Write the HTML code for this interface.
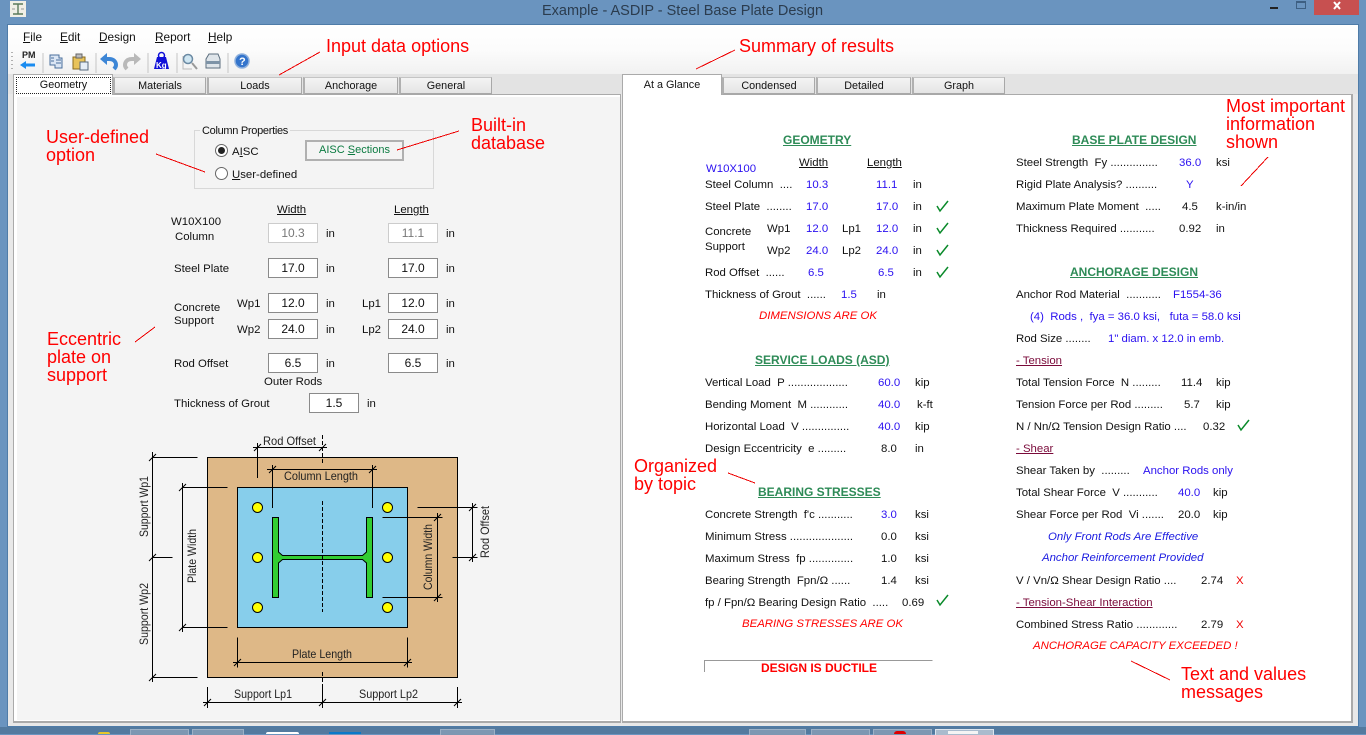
<!DOCTYPE html>
<html><head><meta charset="utf-8"><style>
html,body{margin:0;padding:0}
body{width:1366px;height:734px;overflow:hidden;position:relative;background:#6a94bf;font:11.4px/16px "Liberation Sans",sans-serif;color:#111}
div,span,svg{position:absolute}
span{white-space:nowrap}
u{text-decoration:underline}
.b{color:#2a10f0}.r{color:#f00;font-size:18px;line-height:18px}
.h{font-size:12px;line-height:14px;font-weight:bold;color:#2e8b57;text-decoration:underline}
.m{color:#f00;font-style:italic}.bi{color:#1a1ae0;font-style:italic}
.in{width:48px;height:18px;border:1px solid #8a8a8a;background:#fff;text-align:center;line-height:18px;font-size:12px}
.in.g{border-color:#ccc;color:#777}
.tab{height:15px;top:77px;background:linear-gradient(#f4f4f4,#e4e4e4);border:1px solid #a8a8a8;border-left:2px solid #b0b0b0;border-top:1px solid #c4c4c4;border-bottom:2px solid #a8a8a8;text-align:center;line-height:16px;font-size:10.8px}
.tb{top:729px;height:5px;background:#7d97b2;border:1px solid #9db1c6;border-bottom:0}
</style></head><body>

<!-- frame -->
<div style="left:8px;top:25px;width:1350px;height:701px;background:#e8e8e8;outline:1px solid #4f7ca8"></div>
<div style="left:8px;top:25px;width:1350px;height:49px;background:linear-gradient(#fff 0,#fcfcfc 50%,#f1f1f1 100%)"></div>
<div style="left:8px;top:74px;width:1350px;height:20px;background:#e3e3e3"></div>
<div style="left:0;top:727px;width:1366px;height:7px;background:#537a9f"></div>

<!-- title bar -->
<div style="left:10px;top:1px;width:16px;height:16px;background:#f0efe6"></div>
<svg style="left:10px;top:1px" width="16" height="16"><path d="M3 3h10M3 13h10M8 3v10" stroke="#5a7a5a" stroke-width="1.4" fill="none"/><path d="M2 8h3M11 8h3" stroke="#999"/></svg>
<span style="left:542px;top:2px;font-size:14.5px;line-height:18px;color:#2b3c4e">Example - ASDIP - Steel Base Plate Design</span>
<div style="left:1270px;top:7px;width:8px;height:2px;background:#222"></div>
<div style="left:1296px;top:1px;width:8px;height:5px;border:1px solid #3d5f82;border-top-width:2px"></div>
<div style="left:1314px;top:0;width:45px;height:15px;background:#c75050"></div>
<svg style="left:1332px;top:1px" width="10" height="10"><path d="M2 1l6 7M8 1L2 8" stroke="#fff" stroke-width="2"/></svg>

<!-- menu -->
<span style="left:23px;top:29px;font-size:11.8px"><u>F</u>ile</span>
<span style="left:60px;top:29px;font-size:11.8px"><u>E</u>dit</span>
<span style="left:99px;top:29px;font-size:11.8px"><u>D</u>esign</span>
<span style="left:155px;top:29px;font-size:11.8px"><u>R</u>eport</span>
<span style="left:208px;top:29px;font-size:11.8px"><u>H</u>elp</span>

<!-- toolbar -->
<svg style="left:8px;top:48px;overflow:visible" width="260" height="26">
<path d="M4 4v1M4 8v1M4 12v1M4 16v1M4 20v1" stroke="#999" stroke-width="1.5"/>
<text x="14" y="10" font-size="9" font-weight="bold" fill="#222" font-family="Liberation Sans">PM</text>
<path d="M12 17l6-4v2.500h9v3h-9V21z" fill="#1a8cf0"/>
<path d="M35 5v20M88 5v20M140 5v20M169 5v20M220 5v20" stroke="#c5c5c5"/>
<path d="M42 7h9v3h3v10H47v-3h-5z" fill="#dbe6f4" stroke="#4a6f9c"/><path d="M48 12h5M48 15h5M43 10h3M43 13h3" stroke="#4a6f9c"/>
<path d="M65 9h12v12H65z" fill="#e8c35a" stroke="#8a6b1e"/><path d="M68 6h6v4h-6z" fill="#bbb" stroke="#666"/><path d="M72 14h8v8h-8z" fill="#e5edf6" stroke="#56697e"/>
<path d="M97 11h4c5 0 7 3 7 6c0 2-1 3-2 4" fill="none" stroke="#3d86d6" stroke-width="4"/><path d="M99 5v12l-7-6z" fill="#3d86d6"/>
<g transform="translate(225 0) scale(-1 1)"><path d="M97 11h4c5 0 7 3 7 6c0 2-1 3-2 4" fill="none" stroke="#b9b9b9" stroke-width="4"/><path d="M99 5v12l-7-6z" fill="#b9b9b9"/></g>
<path d="M146 21l3-12h9l3 12z" fill="#1010d8"/><circle cx="153.500" cy="7.500" r="3" fill="none" stroke="#1010d8" stroke-width="1.500"/>
<text x="148" y="20" font-size="8" font-weight="bold" fill="#fff" font-family="Liberation Sans">Kg</text>
<path d="M175 8v13h9" stroke="#bbb" fill="none"/><circle cx="180" cy="11" r="4.500" fill="#cfe6f2" stroke="#6b8aa3" stroke-width="1.500"/><path d="M184 15l5 6" stroke="#999" stroke-width="2"/>
<path d="M198 11l3-5h9l2 5v9h-14z" fill="#dfe5ea" stroke="#5b6d7d"/><path d="M198 13h14v3h-14z" fill="#7d93a7"/>
<circle cx="234" cy="13" r="7" fill="#3374cc" stroke="#8fb1dd" stroke-width="1.500"/><text x="231" y="17" font-size="11" font-weight="bold" fill="#fff" font-family="Liberation Sans">?</text>
</svg>

<!-- panels -->
<div style="left:13px;top:94px;width:606px;height:626px;background:#fff;border:1px solid #aaa;border-width:1px 1px 2px 1px"></div>
<div style="left:17px;top:97px;width:603px;height:623px;background:#f4f4f4"></div>
<div style="left:622px;top:94px;width:728px;height:626px;background:#fff;border:1px solid #aaa;border-width:1px 2px 2px 1px"></div>

<!-- left tabs -->
<div style="left:13px;top:74px;width:100px;height:21px;background:#fff;border:1px solid #aaa;border-bottom:0;box-sizing:border-box"></div>
<div style="left:16px;top:77px;width:93px;height:15px;border:1px dotted #222;text-align:center;line-height:14px;font-size:10.8px">Geometry</div>
<div class="tab" style="left:113px;width:90px">Materials</div>
<div class="tab" style="left:207px;width:92px">Loads</div>
<div class="tab" style="left:303px;width:92px">Anchorage</div>
<div class="tab" style="left:399px;width:90px">General</div>
<!-- right tabs -->
<div style="left:622px;top:74px;width:100px;height:21px;background:#fff;border:1px solid #aaa;border-bottom:0;box-sizing:border-box;text-align:center;line-height:20px;font-size:10.8px">At a Glance</div>
<div class="tab" style="left:722px;width:90px">Condensed</div>
<div class="tab" style="left:816px;width:92px">Detailed</div>
<div class="tab" style="left:912px;width:90px">Graph</div>

<!-- Column properties -->
<div style="left:194px;top:130px;width:238px;height:57px;border:1px solid #d8d8d8"></div>
<span style="left:200px;top:123px;padding:0 2px;background:#f4f4f4;font-size:11px;letter-spacing:-.3px">Column Properties</span>
<div style="left:215px;top:144px;width:11px;height:11px;border:1px solid #666;border-radius:50%;background:#fff"></div>
<div style="left:218px;top:147px;width:7px;height:7px;background:#222;border-radius:50%"></div>
<span style="left:232px;top:144px">A<u>I</u>SC</span>
<div style="left:215px;top:167px;width:11px;height:11px;border:1px solid #666;border-radius:50%;background:#fff"></div>
<span style="left:232px;top:167px"><u>U</u>ser-defined</span>
<div style="left:305px;top:140px;width:95px;height:17px;border:2px solid #b0b0b0;background:#f4f4f4;text-align:center;line-height:17px;color:#0a7a40;font-size:11px"><span style="position:static">AISC <u>S</u>ections</span></div>

<!-- left labels -->
<span style="left:171px;top:214px">W10X100</span><span style="left:175px;top:229px">Column</span>
<span style="left:277px;top:202px"><u>Width</u></span><span style="left:394px;top:202px"><u>Length</u></span>
<div class="in g" style="left:268px;top:223px">10.3</div><span style="left:326px;top:226px">in</span>
<div class="in g" style="left:388px;top:223px">11.1</div><span style="left:446px;top:226px">in</span>
<span style="left:174px;top:261px">Steel Plate</span>
<div class="in" style="left:268px;top:258px">17.0</div><span style="left:326px;top:261px">in</span>
<div class="in" style="left:388px;top:258px">17.0</div><span style="left:446px;top:261px">in</span>
<span style="left:174px;top:300px">Concrete</span><span style="left:174px;top:313px">Support</span>
<span style="left:237px;top:296px">Wp1</span><span style="left:362px;top:296px">Lp1</span>
<div class="in" style="left:268px;top:293px">12.0</div><span style="left:326px;top:296px">in</span>
<div class="in" style="left:388px;top:293px">12.0</div><span style="left:446px;top:296px">in</span>
<span style="left:237px;top:322px">Wp2</span><span style="left:362px;top:322px">Lp2</span>
<div class="in" style="left:268px;top:319px">24.0</div><span style="left:326px;top:322px">in</span>
<div class="in" style="left:388px;top:319px">24.0</div><span style="left:446px;top:322px">in</span>
<span style="left:174px;top:356px">Rod Offset</span>
<div class="in" style="left:268px;top:353px">6.5</div><span style="left:326px;top:356px">in</span>
<div class="in" style="left:388px;top:353px">6.5</div><span style="left:446px;top:356px">in</span>
<span style="left:264px;top:374px">Outer Rods</span>
<span style="left:174px;top:396px">Thickness of Grout</span>
<div class="in" style="left:309px;top:393px">1.5</div><span style="left:367px;top:396px">in</span>

<!-- diagram -->
<svg style="left:0;top:0" width="1366" height="734" font-family="Liberation Sans" font-size="12" fill="#222">
<rect x="207.500" y="457.500" width="250" height="220" fill="#deb887" stroke="#000"/>
<rect x="237.500" y="487.500" width="170" height="140" fill="#87ceeb" stroke="#000"/>
<g fill="#ff0" stroke="#000"><circle cx="257.500" cy="507.500" r="5"/><circle cx="387.500" cy="507.500" r="5"/><circle cx="257.500" cy="557.500" r="5"/><circle cx="387.500" cy="557.500" r="5"/><circle cx="257.500" cy="607.500" r="5"/><circle cx="387.500" cy="607.500" r="5"/></g>
<path d="M272.500 517.500h6V552L282.500 555.500H362.500L366.500 552V517.500h6V597.500h-6V563L362.500 559.500H282.500L278.500 563V597.500h-6Z" fill="#32cd32" stroke="#000"/>
<path d="M322.500 501v111M322.500 435v28M322.500 672v15" stroke="#000" stroke-dasharray="4 2" fill="none"/>
<g stroke="#000" fill="none">
<path d="M253 447.500h74M257.500 443v35M267 469.500h110M272.500 465v43M372.500 465v43"/>
<path d="M152.500 452v230M152.500 457.500h45M152.500 557.500h20M152.500 677.500h45"/>
<path d="M182.500 483v149M182.500 487.500h45M182.500 627.500h45"/>
<path d="M233 662.500h179M237.500 637.500v30M407.500 637.500v30"/>
<path d="M203 702.500h259M207.500 687v21M322.500 687v21M457.500 687v21"/>
<path d="M437.500 513v89M382.500 517.500h60M382.500 597.500h60"/>
<path d="M472.500 503v59M417.500 507.500h60M452.500 557.500h25"/>
<path d="M254 451l7-7M319 451l7-7M269 473l7-7M369 473l7-7M149 461l7-7M149 561l7-7M149 681l7-7M179 491l7-7M179 631l7-7M234 666l7-7M404 666l7-7M204 706l7-7M319 706l7-7M454 706l7-7M434 521l7-7M434 601l7-7M469 511l7-7M469 561l7-7"/>
</g>
<text x="263" y="445" textLength="53" lengthAdjust="spacingAndGlyphs">Rod Offset</text>
<text x="284" y="480" textLength="74" lengthAdjust="spacingAndGlyphs">Column Length</text>
<text x="292" y="658" textLength="60" lengthAdjust="spacingAndGlyphs">Plate Length</text>
<text x="234" y="698" textLength="58" lengthAdjust="spacingAndGlyphs">Support Lp1</text>
<text x="359" y="698" textLength="59" lengthAdjust="spacingAndGlyphs">Support Lp2</text>
<text transform="translate(148 537) rotate(-90)" textLength="61" lengthAdjust="spacingAndGlyphs">Support Wp1</text>
<text transform="translate(148 645) rotate(-90)" textLength="62" lengthAdjust="spacingAndGlyphs">Support Wp2</text>
<text transform="translate(196 583) rotate(-90)" textLength="54" lengthAdjust="spacingAndGlyphs">Plate Width</text>
<text transform="translate(432 590) rotate(-90)" textLength="66" lengthAdjust="spacingAndGlyphs">Column Width</text>
<text transform="translate(489 558) rotate(-90)" textLength="52" lengthAdjust="spacingAndGlyphs">Rod Offset</text>
<!-- red annotation lines -->
<g stroke="#e00" fill="none" stroke-width="1" shape-rendering="crispEdges">
<path d="M279 75l41-23M696 69l39-19M1241 186l27-29M397 150l62-19M156 154l49 18M135 342l20-15M728 473l27 10M1131 661l39 19"/>
</g>
<!-- check marks -->
<g stroke="#0a8a2a" fill="none" stroke-width="1.500">
<path d="M937 206l3 5 8-10M937 228l3 5 8-10M937 250l3 5 8-10M937 272l3 5 8-10M1238 425l3 5 8-10M937 600l3 5 8-10"/>
</g>
<path d="M704.500 672v-11.500h228" stroke="#999" fill="none"/>
</svg>

<!-- annotations -->
<span class="r" style="left:326px;top:37px">Input data options</span>
<span class="r" style="left:739px;top:37px">Summary of results</span>
<span class="r" style="left:1226px;top:97px">Most important</span>
<span class="r" style="left:1226px;top:115px">information</span>
<span class="r" style="left:1226px;top:133px">shown</span>
<span class="r" style="left:471px;top:116px">Built-in</span>
<span class="r" style="left:471px;top:134px">database</span>
<span class="r" style="left:46px;top:128px">User-defined</span>
<span class="r" style="left:46px;top:146px">option</span>
<span class="r" style="left:47px;top:330px">Eccentric</span>
<span class="r" style="left:47px;top:348px">plate on</span>
<span class="r" style="left:47px;top:366px">support</span>
<span class="r" style="left:634px;top:457px">Organized</span>
<span class="r" style="left:634px;top:475px">by topic</span>
<span class="r" style="left:1181px;top:665px">Text and values</span>
<span class="r" style="left:1181px;top:683px">messages</span>

<!-- results: left column -->
<span class="h" style="left:783px;top:133px">GEOMETRY</span>
<span class="b" style="left:706px;top:161px">W10X100</span>
<span style="left:799px;top:155px"><u>Width</u></span><span style="left:867px;top:155px"><u>Length</u></span>
<span style="left:705px;top:177px">Steel Column &nbsp;....</span><span class="b" style="left:806px;top:177px">10.3</span><span class="b" style="left:876px;top:177px">11.1</span><span style="left:913px;top:177px">in</span>
<span style="left:705px;top:199px">Steel Plate &nbsp;........</span><span class="b" style="left:806px;top:199px">17.0</span><span class="b" style="left:876px;top:199px">17.0</span><span style="left:913px;top:199px">in</span>
<span style="left:705px;top:224px">Concrete</span><span style="left:705px;top:239px">Support</span>
<span style="left:767px;top:221px">Wp1</span><span class="b" style="left:806px;top:221px">12.0</span><span style="left:842px;top:221px">Lp1</span><span class="b" style="left:876px;top:221px">12.0</span><span style="left:913px;top:221px">in</span>
<span style="left:767px;top:243px">Wp2</span><span class="b" style="left:806px;top:243px">24.0</span><span style="left:842px;top:243px">Lp2</span><span class="b" style="left:876px;top:243px">24.0</span><span style="left:913px;top:243px">in</span>
<span style="left:705px;top:265px">Rod Offset &nbsp;......</span><span class="b" style="left:808px;top:265px">6.5</span><span class="b" style="left:878px;top:265px">6.5</span><span style="left:913px;top:265px">in</span>
<span style="left:705px;top:287px">Thickness of Grout &nbsp;......</span><span class="b" style="left:841px;top:287px">1.5</span><span style="left:877px;top:287px">in</span>
<span class="m" style="left:759px;top:308px">DIMENSIONS ARE OK</span>

<span class="h" style="left:755px;top:353px">SERVICE LOADS (ASD)</span>
<span style="left:705px;top:375px">Vertical Load &nbsp;P ...................</span><span class="b" style="left:878px;top:375px">60.0</span><span style="left:915px;top:375px">kip</span>
<span style="left:705px;top:397px">Bending Moment &nbsp;M ............</span><span class="b" style="left:878px;top:397px">40.0</span><span style="left:917px;top:397px">k-ft</span>
<span style="left:705px;top:419px">Horizontal Load &nbsp;V ...............</span><span class="b" style="left:878px;top:419px">40.0</span><span style="left:915px;top:419px">kip</span>
<span style="left:705px;top:441px">Design Eccentricity &nbsp;e .........</span><span style="left:881px;top:441px">8.0</span><span style="left:915px;top:441px">in</span>

<span class="h" style="left:758px;top:485px">BEARING STRESSES</span>
<span style="left:705px;top:507px">Concrete Strength &nbsp;f'c ...........</span><span class="b" style="left:881px;top:507px">3.0</span><span style="left:915px;top:507px">ksi</span>
<span style="left:705px;top:529px">Minimum Stress ....................</span><span style="left:881px;top:529px">0.0</span><span style="left:915px;top:529px">ksi</span>
<span style="left:705px;top:551px">Maximum Stress &nbsp;fp ..............</span><span style="left:881px;top:551px">1.0</span><span style="left:915px;top:551px">ksi</span>
<span style="left:705px;top:573px">Bearing Strength &nbsp;Fpn/Ω ......</span><span style="left:881px;top:573px">1.4</span><span style="left:915px;top:573px">ksi</span>
<span style="left:705px;top:595px">fp / Fpn/Ω Bearing Design Ratio &nbsp;.....</span><span style="left:902px;top:595px">0.69</span>
<span class="m" style="left:742px;top:616px">BEARING STRESSES ARE OK</span>
<span style="left:761px;top:661px;color:#f00;font-weight:bold;font-size:12px;line-height:14px">DESIGN IS DUCTILE</span>

<!-- results: right column -->
<span class="h" style="left:1072px;top:133px">BASE PLATE DESIGN</span>
<span style="left:1016px;top:155px">Steel Strength &nbsp;Fy ...............</span><span class="b" style="left:1179px;top:155px">36.0</span><span style="left:1216px;top:155px">ksi</span>
<span style="left:1016px;top:177px">Rigid Plate Analysis? ..........</span><span class="b" style="left:1186px;top:177px">Y</span>
<span style="left:1016px;top:199px">Maximum Plate Moment &nbsp;.....</span><span style="left:1182px;top:199px">4.5</span><span style="left:1216px;top:199px">k-in/in</span>
<span style="left:1016px;top:221px">Thickness Required ...........</span><span style="left:1179px;top:221px">0.92</span><span style="left:1216px;top:221px">in</span>

<span class="h" style="left:1070px;top:265px">ANCHORAGE DESIGN</span>
<span style="left:1016px;top:287px">Anchor Rod Material &nbsp;...........</span><span class="b" style="left:1173px;top:287px">F1554-36</span>
<span class="b" style="left:1030px;top:309px">(4) &nbsp;Rods , &nbsp;fya = 36.0 ksi, &nbsp;&nbsp;futa = 58.0 ksi</span>
<span style="left:1016px;top:331px">Rod Size ........</span><span class="b" style="left:1108px;top:331px">1" diam. x 12.0 in emb.</span>
<span style="left:1016px;top:353px;color:#7a0a3a"><u>- Tension</u></span>
<span style="left:1016px;top:375px">Total Tension Force &nbsp;N .........</span><span style="left:1181px;top:375px">11.4</span><span style="left:1216px;top:375px">kip</span>
<span style="left:1016px;top:397px">Tension Force per Rod .........</span><span style="left:1184px;top:397px">5.7</span><span style="left:1216px;top:397px">kip</span>
<span style="left:1016px;top:419px">N / Nn/Ω Tension Design Ratio ....</span><span style="left:1203px;top:419px">0.32</span>
<span style="left:1016px;top:441px;color:#7a0a3a"><u>- Shear</u></span>
<span style="left:1016px;top:463px">Shear Taken by &nbsp;.........</span><span class="b" style="left:1143px;top:463px">Anchor Rods only</span>
<span style="left:1016px;top:485px">Total Shear Force &nbsp;V ...........</span><span class="b" style="left:1178px;top:485px">40.0</span><span style="left:1213px;top:485px">kip</span>
<span style="left:1016px;top:507px">Shear Force per Rod &nbsp;Vi .......</span><span style="left:1178px;top:507px">20.0</span><span style="left:1213px;top:507px">kip</span>
<span class="bi" style="left:1048px;top:529px">Only Front Rods Are Effective</span>
<span class="bi" style="left:1042px;top:550px">Anchor Reinforcement Provided</span>
<span style="left:1016px;top:573px">V / Vn/Ω Shear Design Ratio ....</span><span style="left:1201px;top:573px">2.74</span><span style="left:1236px;top:573px;color:#e00">X</span>
<span style="left:1016px;top:595px;color:#7a0a3a"><u>- Tension-Shear Interaction</u></span>
<span style="left:1016px;top:617px">Combined Stress Ratio .............</span><span style="left:1201px;top:617px">2.79</span><span style="left:1236px;top:617px;color:#e00">X</span>
<span class="m" style="left:1033px;top:638px">ANCHORAGE CAPACITY EXCEEDED !</span>

<!-- taskbar -->
<div class="tb" style="left:130px;width:57px"></div>
<div class="tb" style="left:192px;width:50px"></div>
<div class="tb" style="left:440px;width:53px"></div>
<div class="tb" style="left:749px;width:55px"></div>
<div class="tb" style="left:811px;width:57px"></div>
<div class="tb" style="left:873px;width:57px"></div>
<div class="tb" style="left:935px;width:57px;background:#a9bbcd;border-color:#dde5ee"></div>
<div style="left:266px;top:732px;width:33px;height:2px;background:#fff;border-radius:3px 3px 0 0"></div>
<div style="left:329px;top:732px;width:32px;height:2px;background:#0a78c8"></div>
<div style="left:98px;top:732px;width:12px;height:2px;background:#e6c72a;border-radius:6px 6px 0 0"></div>
<div style="left:894px;top:731px;width:12px;height:3px;background:#d00;border-radius:6px 6px 0 0"></div>
<div style="left:948px;top:731px;width:30px;height:3px;background:#f4f4f4"></div>
</body></html>
